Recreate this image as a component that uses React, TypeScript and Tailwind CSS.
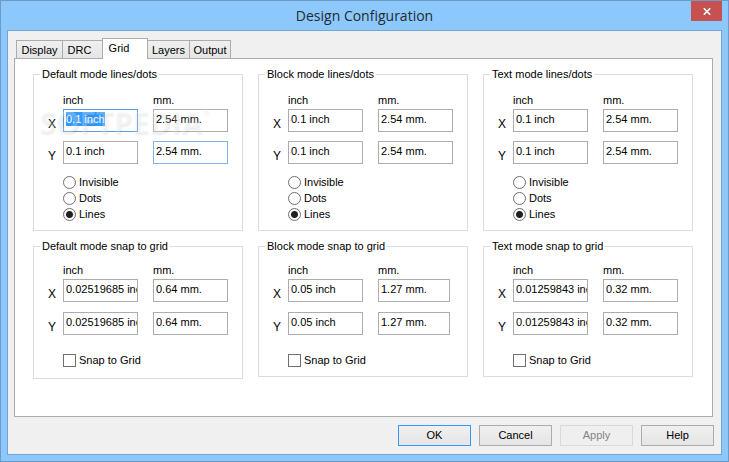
import { useId } from "react";

const modes = [
  { name: "Default mode", grid: ["0.1 inch", "2.54 mm."], snap: ["0.02519685 inch", "0.64 mm."] },
  { name: "Block mode", grid: ["0.1 inch", "2.54 mm."], snap: ["0.05 inch", "1.27 mm."] },
  { name: "Text mode", grid: ["0.1 inch", "2.54 mm."], snap: ["0.01259843 inch", "0.32 mm."] },
];

function Field({ value, label, state, width = "w-[75px]" }: { value: string; label: string; state?: string; width?: string }) {
  const border =
    state === "focus" ? "border-[#569de5]" : state === "hover" ? "border-[#7eb4ea]" : "border-[#abadb3]";
  return (
    <div className={`flex h-[23px] items-start border bg-white pt-0.5 pl-0.5 ${width} ${border}`}>
      <input
        aria-label={label}
        defaultValue={value}
        size={1}
        className={
          state === "focus"
            ? "h-[14px] w-[39px] min-w-0 bg-[#3399ff] p-0 text-white outline-none"
            : "h-[14px] w-full min-w-0 p-0 outline-none"
        }
      />
    </div>
  );
}

type PairsProps = { values: string[]; name: string; first?: boolean; spacing: string; mmWidth?: string };

function Pairs({ values, name, first, spacing, mmWidth }: PairsProps) {
  return (
    <>
      <div className="flex gap-[15px] pb-0.5 pl-[29px] leading-[14px]">
        <span className="w-[75px]">inch</span>
        <span>mm.</span>
      </div>
      <div className={spacing}>
        {["X", "Y"].map((axis) => (
          <div key={axis} className="flex">
            <span className="w-[29px] pt-2 pl-[14px] text-xs leading-[14px]">{axis}</span>
            <Field label={`${name} ${axis} inch`} value={values[0]} state={first && axis === "X" ? "focus" : ""} />
            <div className="w-[15px]" />
            <Field label={`${name} ${axis} mm`} value={values[1]} state={first && axis === "Y" ? "hover" : ""} width={mmWidth} />
          </div>
        ))}
      </div>
    </>
  );
}

function Group({ title, className, children }: { title: string; className: string; children: React.ReactNode }) {
  return (
    <fieldset className={`min-w-0 border border-[#dcdcdc] ${className}`}>
      <legend className="ml-1.5 h-[14px] px-0.5 leading-[14px]">{title}</legend>
      {children}
    </fieldset>
  );
}

function LinesGroup({ name, values, first }: { name: string; values: string[]; first: boolean }) {
  const group = useId();
  return (
    <Group title={`${name} lines/dots`} className="pb-2">
      <div className="pt-3">
        <Pairs values={values} name={name} first={first} spacing="space-y-[9px]" />
      </div>
      <div className="pt-[10px] pl-[29px]">
        {["Invisible", "Dots", "Lines"].map((option) => (
          <label key={option} className="flex h-4 items-center gap-[3px]">
            <input
              type="radio"
              name={group}
              defaultChecked={option === "Lines"}
              className="size-[13px] appearance-none rounded-full border border-[#707070] bg-white checked:bg-[radial-gradient(circle,#212121_3px,#fff_4px)]"
            />
            {option}
          </label>
        ))}
      </div>
    </Group>
  );
}

function SnapGroup({ name, values, index }: { name: string; values: string[]; index: number }) {
  return (
    <Group title={`${name} snap to grid`} className={index === 0 ? "pb-[10px]" : "pb-2"}>
      <div className="pt-[10px]">
        <Pairs
          values={values}
          name={`${name} snap`}
          spacing="space-y-[10px]"
          mmWidth={index === 1 ? "w-[72px]" : "w-[75px]"}
        />
      </div>
      <label className="mt-[18px] ml-[29px] flex h-[15px] items-center gap-[3px]">
        <input type="checkbox" className="size-[13px] appearance-none border border-[#707070] bg-white checked:bg-[#212121]" />
        Snap to Grid
      </label>
    </Group>
  );
}

const tab = "border border-b-0 border-[#acacac] -ml-px bg-linear-to-b from-[#f0f0f0] to-[#e5e5e5] h-[18px] leading-[18px]";
const button = "h-[21px] w-[73px] border text-center leading-[19px]";

export default function App() {
  return (
    <div className="flex min-h-screen flex-col border border-[#6e9bc5] bg-[#8cc8fb] px-1.5 pb-1.5 font-['Liberation_Sans',Arial,sans-serif] text-[11px] text-black">
      <header className="grid h-[29px] grid-cols-[1fr_auto_1fr] items-start">
        <h1 className="col-start-2 pt-[5px] font-['Open_Sans','Noto_Sans',sans-serif] text-[14px] leading-5 text-[#1f2a33]">Design Configuration</h1>
        <button aria-label="Close" className="flex h-5 w-[31px] items-center justify-center justify-self-end bg-[#c75050]">
          <svg width="8" height="7" viewBox="0 0 8 7" stroke="#fff" strokeWidth="1.6">
            <path d="M.8 .3 7.2 6.7M7.2 .3 .8 6.7" />
          </svg>
        </button>
      </header>
      <main className="flex grow flex-col border border-[#73a5d2] bg-[#f0f0f0] pt-[7px] pr-[7px] pb-2 pl-1.5">
        <nav role="tablist" className="flex h-5 items-end pl-[3px]">
          <button role="tab" className={`${tab} w-[47px]`}>Display</button>
          <button role="tab" className={`${tab} w-[41px] pr-1.5`}>DRC</button>
          <button role="tab" aria-selected="true" className="relative z-10 -mb-px -ml-px h-[21px] w-[46px] border border-b-0 border-[#acacac] bg-white pr-3 pb-0.5 leading-[18px]">Grid</button>
          <button role="tab" className={`${tab} w-[43px]`}>Layers</button>
          <button role="tab" className={`${tab} w-[42px]`}>Output</button>
        </nav>
        <section className="relative mr-px grow border border-[#acacac] bg-white pt-2 pr-[19px] pl-[18px]">
          <div className="grid grid-cols-3 items-start gap-x-[15px] gap-y-2">
            {modes.map((m, i) => (
              <LinesGroup key={m.name} name={m.name} values={m.grid} first={i === 0} />
            ))}
            {modes.map((m, i) => (
              <SnapGroup key={m.name} name={m.name} values={m.snap} index={i} />
            ))}
          </div>
          <div className="pointer-events-none absolute top-[50px] left-6 flex items-start font-['Open_Sans',sans-serif] font-bold text-white/25 [text-shadow:1px_2px_2px_#00000012]">
            <span className="text-[30px] leading-[26px]">SOFTPEDIA</span>
            <span className="text-[9px] leading-[6px]">®</span>
          </div>
        </section>
        <footer className="flex justify-end gap-2 pt-2">
          <button className={`${button} border-[#3399ff] bg-linear-to-b from-[#f0f0f0] to-[#e5e5e5]`}>OK</button>
          <button className={`${button} border-[#acacac] bg-linear-to-b from-[#f0f0f0] to-[#e5e5e5]`}>Cancel</button>
          <button disabled className={`${button} border-[#d9d9d9] bg-[#efefef] text-[#838383]`}>Apply</button>
          <button className={`${button} border-[#acacac] bg-linear-to-b from-[#f0f0f0] to-[#e5e5e5]`}>Help</button>
        </footer>
      </main>
    </div>
  );
}
